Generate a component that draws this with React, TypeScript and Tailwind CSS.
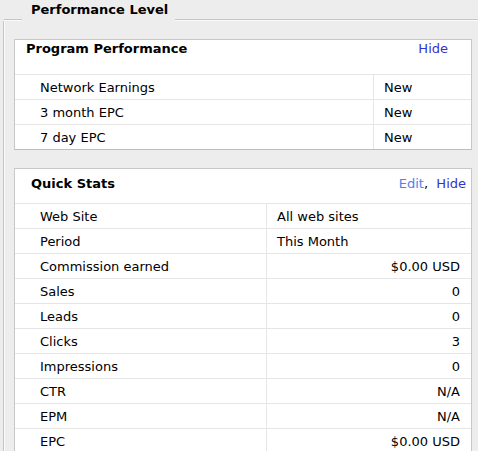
import React from "react";

const font = { fontFamily: '"DejaVu Sans", Verdana, sans-serif' };

function Row({ label, value, right, sep }: { label: string; value: string; right?: boolean; sep: string }) {
  return (
    <div className="flex h-[25px] items-center border-t border-[#e6e6e6]">
      <div className={`${sep} h-full flex items-center pt-[1px] pl-[25px] border-r border-[#e6e6e6] shrink-0`}>{label}</div>
      <div className={`flex-1 h-full flex items-center pt-[1px] ${right ? "justify-end pr-[11px]" : "pl-[10px]"}`}>{value}</div>
    </div>
  );
}

export default function App() {
  const quick: [string, string, boolean][] = [
    ["Web Site", "All web sites", false],
    ["Period", "This Month", false],
    ["Commission earned", "$0.00 USD", true],
    ["Sales", "0", true],
    ["Leads", "0", true],
    ["Clicks", "3", true],
    ["Impressions", "0", true],
    ["CTR", "N/A", true],
    ["EPM", "N/A", true],
    ["EPC", "$0.00 USD", true],
  ];
  return (
    <div className="w-[478px] h-[451px] overflow-hidden bg-[#ededed] text-[13px] text-black" style={font}>
      <div className="flex items-end h-[21px] pl-[4px]">
        <div className="w-[18px] h-[2px] border-t border-[#c4c4c4] shadow-[inset_0_1px_0_#fafafa]" />
        <div className="w-[153px] pl-[9px] font-bold leading-[16px] pb-[3px]">Performance Level</div>
        <div className="flex-1 h-[2px] border-t border-[#c4c4c4] shadow-[inset_0_1px_0_#fafafa]" />
      </div>
      <div className="ml-[3px] w-[520px] border-l border-[#c4c4c4] pl-[10px] pt-[18px] shadow-[inset_1px_0_0_#fafafa]">
        <div className="w-[458px] bg-white border border-[#c8c8c8] border-b-[#bdbdbd]">
          <div className="h-[34px] flex items-start justify-between pl-[11px] pr-[23px] pt-[1px] leading-[16px]">
            <span className="font-bold">Program Performance</span>
            <span className="text-[#3434c8]">Hide</span>
          </div>
          <Row label="Network Earnings" value="New" sep="w-[359px]" />
          <Row label="3 month EPC" value="New" sep="w-[359px]" />
          <Row label="7 day EPC" value="New" sep="w-[359px]" />
        </div>
        <div className="mt-[18px] w-[458px] bg-white border border-[#c8c8c8]">
          <div className="h-[34px] flex items-start justify-between pl-[16px] pr-[5px] pt-[7px] leading-[16px]">
            <span className="font-bold">Quick Stats</span>
            <span>
              <span className="text-[#4a86ea]">Edit</span>
              <span>,&nbsp;&nbsp;</span>
              <span className="text-[#3434c8]">Hide</span>
            </span>
          </div>
          {quick.map(([l, v, r]) => (
            <Row key={l} label={l} value={v} right={r} sep="w-[252px]" />
          ))}
        </div>
      </div>
    </div>
  );
}
